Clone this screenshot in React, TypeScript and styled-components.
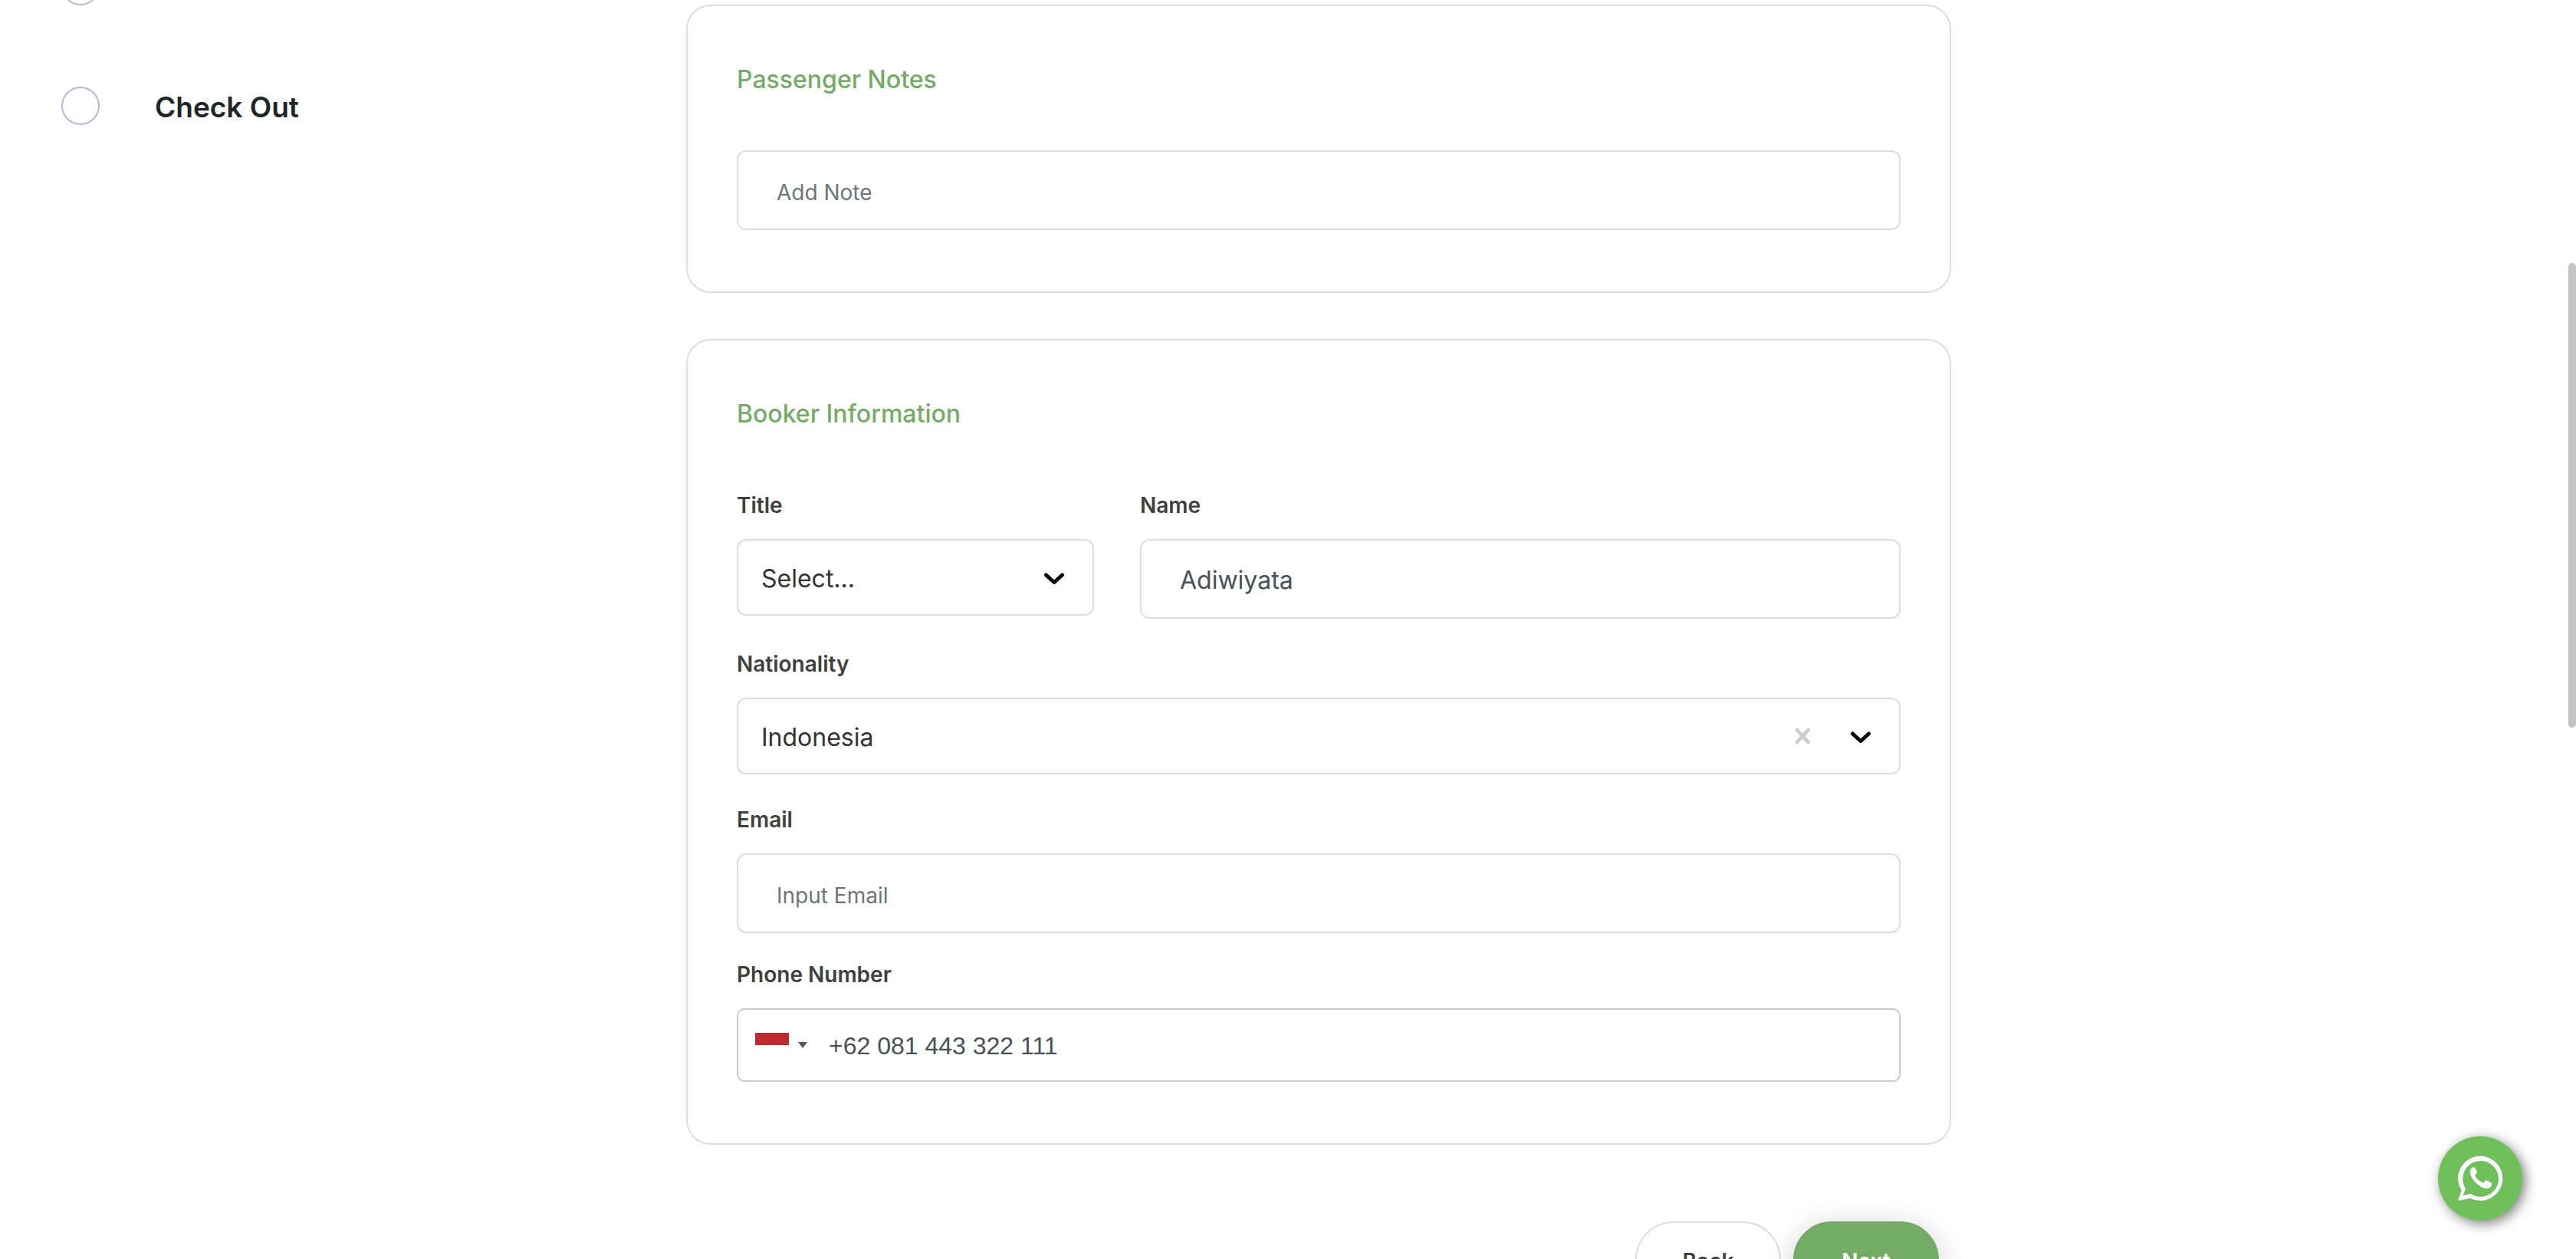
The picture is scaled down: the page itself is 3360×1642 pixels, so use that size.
import React from 'react';
import styled, { createGlobalStyle } from 'styled-components';

const GlobalStyle = createGlobalStyle`
  *, *::before, *::after { box-sizing: border-box; }
  body {
    margin: 0;
    background: #fff;
    color: #212529;
    font-family: Inter, "Liberation Sans", sans-serif;
  }
  input, select, button { font-family: inherit; }
`;

const Viewport = styled.div`
  height: 100vh;
  overflow: hidden;
`;

const Layout = styled.div`
  display: grid;
  grid-template-columns: 163fr 330fr 163fr;
  align-items: start;
  padding-left: 80px;
`;

const Steps = styled.ol`
  display: flex;
  flex-direction: column;
  gap: 106px;
  margin: -43px 0 0;
  padding: 0;
  list-style: none;
`;

const Step = styled.li`
  display: flex;
  align-items: center;
  gap: 72px;
  height: 50px;
`;

const StepMark = styled.span`
  flex: none;
  width: 50px;
  height: 50px;
  border: 2px solid #b9b6d9;
  border-radius: 50%;
`;

const StepName = styled.span`
  padding-top: 4px;
  font-size: 37px;
  font-weight: 600;
  line-height: 46px;
`;

const Main = styled.main`
  display: flex;
  flex-direction: column;
  padding-top: 6px;
`;

const Card = styled.section`
  margin-bottom: 60px;
  padding: 66px 64px 80px;
  border: 2px solid #ddd;
  border-radius: 32px;
`;

const CardTitle = styled.h2<{ $gap: number }>`
  margin: 0 0 ${(p) => p.$gap}px;
  color: #74ac66;
  font-size: 32px;
  font-weight: 500;
  line-height: 60px;
`;

const FieldRow = styled.div`
  display: grid;
  grid-template-columns: 466fr 992fr;
  align-items: start;
  gap: 60px;
`;

const Field = styled.div<{ $top?: number }>`
  display: flex;
  flex-direction: column;
  min-width: 0;
  margin-top: ${(p) => p.$top ?? 0}px;
`;

const Label = styled.label`
  margin-bottom: 24px;
  color: #404040;
  font-size: 28px;
  font-weight: 600;
  line-height: 40px;
`;

const TextInput = styled.input`
  width: 100%;
  height: 104px;
  padding: 2px 50px 0;
  border: 2px solid #ddd;
  border-radius: 12px;
  background: #fff;
  color: #495057;
  font-size: 32px;
  &::placeholder {
    color: #6c757d;
    font-size: 28px;
    opacity: 1;
  }
`;

const SelectBox = styled.div`
  position: relative;
`;

const Select = styled.select`
  display: block;
  width: 100%;
  height: 100px;
  padding: 2px 110px 0 30px;
  border: 2px solid #ddd;
  border-radius: 12px;
  background: #fff;
  color: #333;
  font-size: 32px;
  appearance: none;
`;

const SelectIcons = styled.div`
  position: absolute;
  inset: 0 32px 0 auto;
  display: flex;
  align-items: center;
  gap: 36px;
  pointer-events: none;
`;

const ClearButton = styled.button`
  display: flex;
  padding: 0;
  border: 0;
  background: none;
  pointer-events: auto;
`;

const PhoneBox = styled.div`
  display: flex;
  align-items: center;
  height: 96px;
  border: 2px solid #cacaca;
  border-radius: 10px;
`;

const CountryButton = styled.button`
  display: flex;
  align-items: center;
  gap: 12px;
  padding: 0 0 0 22px;
  border: 0;
  background: none;
`;

const Flag = styled.span`
  width: 44px;
  height: 32px;
  background: linear-gradient(#bf2a31 50%, #fff 50%);
`;

const Caret = styled.span`
  border: 6px solid transparent;
  border-top: 8px solid #555;
  border-bottom: 0;
`;

const PhoneInput = styled.input`
  flex: 1;
  min-width: 0;
  height: 92px;
  margin-left: 28px;
  padding: 2px 0 0;
  border: 0;
  background: none;
  color: #495057;
  && { font-family: "Liberation Sans", Arial, sans-serif; }
  font-size: 32px;
`;

const Actions = styled.div`
  display: flex;
  justify-content: flex-end;
  gap: 16px;
  padding: 40px 16px 60px;
`;

const ActionButton = styled.button<{ $primary?: boolean }>`
  width: 190px;
  height: 102px;
  padding: 2px 0 0;
  border: 2px solid ${(p) => (p.$primary ? '#74ac66' : '#ddd')};
  border-radius: 50px;
  background: ${(p) => (p.$primary ? '#74ac66' : '#fff')};
  box-shadow: ${(p) => (p.$primary ? '0 8px 40px rgba(0, 0, 0, 0.2)' : 'none')};
  color: ${(p) => (p.$primary ? '#fff' : '#404040')};
  font-size: 28px;
  font-weight: 600;
`;

const ChatButton = styled.button`
  position: fixed;
  right: 70px;
  bottom: 50px;
  display: flex;
  align-items: center;
  justify-content: center;
  width: 110px;
  height: 110px;
  padding: 0;
  border: 0;
  border-radius: 50%;
  background: #6fbf5a;
  box-shadow: 4px 4px 16px rgba(0, 0, 0, 0.5);
`;

const ScrollThumb = styled.div`
  position: fixed;
  top: 343px;
  right: 0;
  width: 10px;
  height: 606px;
  border-radius: 5px;
  background: #c3c3c3;
`;

const Chevron = () => (
  <svg width="40" height="40" viewBox="0 0 40 40" aria-hidden="true">
    <path d="M9.5 17 20 26.5 30.5 17" fill="none" stroke="#000" strokeWidth="5" strokeLinecap="round" strokeLinejoin="round" />
  </svg>
);

const Cross = () => (
  <svg width="40" height="40" viewBox="0 0 40 40" aria-hidden="true">
    <path d="M13 12 27.500 28M27.500 12 13 28" fill="none" stroke="#ccc" strokeWidth="4.6" strokeLinecap="round" />
  </svg>
);

const WhatsAppMark = () => (
  <svg width="70" height="70" viewBox="0 6 210 210" fill="#fff" aria-hidden="true">
    <path
      fillRule="evenodd"
      d="M18 198 32 157A87 87 0 1 1 66 188ZM38 177 69 171A70 70 0 1 0 48 150Z"
    />
    <path d="M72 70Q78 65 85 68L93 84Q94 90 86 97Q84 100 87 104Q98 120 115 127Q118 128 121 125Q126 118 130 118L150 128Q152 132 149 140Q143 150 128 150Q108 148 86 126Q66 104 65 88Q65 76 72 70Z" />
  </svg>
);

export default function App() {
  return (
    <Viewport>
      <GlobalStyle />
      <Layout>
        <Steps>
          <Step><StepMark /></Step>
          <Step><StepMark /><StepName>Check Out</StepName></Step>
        </Steps>
        <Main>
          <Card>
            <CardTitle $gap={62}>Passenger Notes</CardTitle>
            <Field>
              <TextInput aria-label="Passenger Notes" placeholder="Add Note" />
            </Field>
          </Card>
          <Card>
            <CardTitle $gap={69}>Booker Information</CardTitle>
            <FieldRow>
              <Field>
                <Label htmlFor="title">Title</Label>
                <SelectBox>
                  <Select id="title" defaultValue="">
                    <option value="">Select...</option>
                  </Select>
                  <SelectIcons><Chevron /></SelectIcons>
                </SelectBox>
              </Field>
              <Field>
                <Label htmlFor="name">Name</Label>
                <TextInput id="name" defaultValue="Adiwiyata" />
              </Field>
            </FieldRow>
            <Field $top={39}>
              <Label htmlFor="nationality">Nationality</Label>
              <SelectBox>
                <Select id="nationality" defaultValue="id">
                  <option value="id">Indonesia</option>
                </Select>
                <SelectIcons>
                  <ClearButton type="button" aria-label="Clear nationality"><Cross /></ClearButton>
                  <Chevron />
                </SelectIcons>
              </SelectBox>
            </Field>
            <Field $top={39}>
              <Label htmlFor="email">Email</Label>
              <TextInput id="email" type="email" placeholder="Input Email" />
            </Field>
            <Field $top={34}>
              <Label htmlFor="phone">Phone Number</Label>
              <PhoneBox>
                <CountryButton type="button" aria-label="Country code"><Flag /><Caret /></CountryButton>
                <PhoneInput id="phone" type="tel" defaultValue="+62 081 443 322 111" />
              </PhoneBox>
            </Field>
          </Card>
          <Actions>
            <ActionButton type="button">Back</ActionButton>
            <ActionButton type="button" $primary>Next</ActionButton>
          </Actions>
        </Main>
      </Layout>
      <ChatButton type="button" aria-label="Chat on WhatsApp"><WhatsAppMark /></ChatButton>
      <ScrollThumb />
    </Viewport>
  );
}
